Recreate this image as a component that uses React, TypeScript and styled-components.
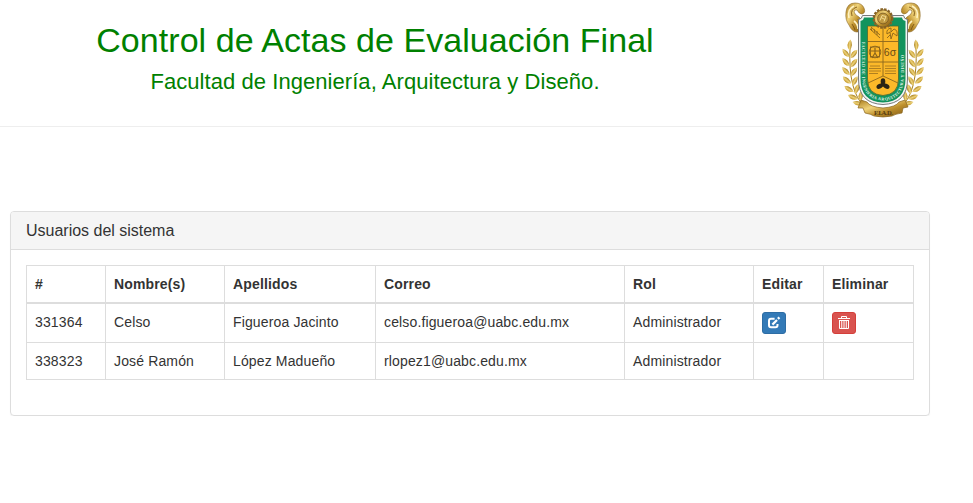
import React from "react";
import styled, { createGlobalStyle } from "styled-components";

const GlobalStyle = createGlobalStyle`
  * { box-sizing: border-box; }
  body {
    margin: 0;
    background: #fff;
    color: #333;
    font: 14px/20px "Liberation Sans", Arial, sans-serif;
    overflow: hidden;
  }
`;

const Header = styled.header`
  display: flex;
  justify-content: space-between;
  height: 127px;
  border-bottom: 1px solid #eee;
  padding: 0 47px 0 0;
`;

const Titles = styled.div`
  width: 750px;
  padding-top: 20px;
  text-align: center;
  color: #008000;
`;

const Title = styled.h1`
  margin: 0;
  font-size: 34px;
  font-weight: 400;
  line-height: 40px;
  letter-spacing: 0.05px;
`;

const Subtitle = styled.h2`
  margin: 10px 0 0;
  font-size: 22px;
  font-weight: 400;
  line-height: 24px;
  letter-spacing: 0.06px;
`;

const Crest = styled.svg`
  display: block;
  width: 86px;
  height: 120px;
  flex: none;
`;

const Panel = styled.section`
  width: 920px;
  height: 205px;
  margin: 84px 0 0 10px;
  border: 1px solid #ddd;
  border-radius: 4px;
  box-shadow: 0 1px 1px rgba(0, 0, 0, 0.05);
`;

const PanelHeading = styled.div`
  height: 38px;
  padding: 9px 15px;
  border-bottom: 1px solid #ddd;
  border-radius: 3px 3px 0 0;
  background: #f5f5f5;
  font-size: 16px;
  line-height: 20px;
  letter-spacing: -0.01px;
`;

const PanelBody = styled.div`
  padding: 15px;
`;

const Table = styled.table`
  width: 887px;
  table-layout: fixed;
  border-collapse: collapse;
  border: 1px solid #ddd;
`;

const HeadCell = styled.th<{ $width: number }>`
  width: ${(p) => p.$width}px;
  height: 37px;
  padding: 0 8px;
  border: 1px solid #ddd;
  border-bottom-width: 2px;
  text-align: left;
  letter-spacing: 0.15px;
`;

const Row = styled.tr<{ $height: number }>`
  height: ${(p) => p.$height}px;
`;

const Cell = styled.td<{ $raised?: boolean }>`
  padding: 0 8px ${(p) => (p.$raised ? 2 : 0)}px;
  border: 1px solid #ddd;
  white-space: nowrap;
  letter-spacing: 0.14px;
`;

const ActionButton = styled.button<{ $fill: string; $edge: string }>`
  display: flex;
  align-items: center;
  justify-content: center;
  width: 24px;
  height: 22px;
  padding: 0;
  border: 1px solid ${(p) => p.$edge};
  border-radius: 3px;
  background: ${(p) => p.$fill};
`;

const Glyph = styled.svg`
  display: block;
  width: 14px;
  height: 14px;
`;

const EditIcon = () => (
  <Glyph viewBox="0 0 14 14" fill="none" stroke="#fff">
    <path d="M7.6 2.8H4Q2 2.8 2 4.8V9.3Q2 11.3 4 11.3H8.5Q10.5 11.3 10.5 9.3V8" strokeWidth="2" />
    <path d="M5.4 8.6 10 4" strokeWidth="2.2" />
    <path d="M10.9 2.9 12.4 1.4" strokeWidth="2.4" />
  </Glyph>
);

const TrashIcon = () => (
  <Glyph viewBox="0 0 14 14" fill="none" stroke="#fff">
    <path d="M4.5 2.5V.5H9.5V2.5M1 2.5H13" />
    <path d="M2.5 4V12.5H11.5V4M4.75 4V12.5M7 4V12.5M9.25 4V12.5M2 4.5H12" />
  </Glyph>
);

const COLUMNS = [
  { label: "#", width: 79 },
  { label: "Nombre(s)", width: 119 },
  { label: "Apellidos", width: 151 },
  { label: "Correo", width: 249 },
  { label: "Rol", width: 129 },
  { label: "Editar", width: 70 },
  { label: "Eliminar", width: 90 },
];

const USERS = [
  { cells: ["331364", "Celso", "Figueroa Jacinto", "celso.figueroa@uabc.edu.mx", "Administrador"], editable: true, height: 40 },
  { cells: ["338323", "José Ramón", "López Madueño", "rlopez1@uabc.edu.mx", "Administrador"], editable: false, height: 37 },
];

const LEAVES = [
  [8, 45, 5], [4, 53, -40], [12, 54, 38], [4, 62, -42], [12, 63, 38], [4, 71, -45],
  [12, 72, 35], [5, 80, -50], [13, 81, 28], [7, 89, -58], [15, 89, 20], [11, 97, -68],
  [19, 96, 8], [16, 103, -80],
];

const Horn = () => (
  <g transform="translate(1 0)">
    <path
      d="M14 3Q6 3 5 12Q4 20 8 25Q11 32 16 32Q21 32 22 26Q23 21 18 17Q14 15 13 12Q13 9 16 10Q18 14 21 14Q25 13 23 8Q21 3 14 3Z"
      fill="url(#gold)"
      stroke="#8a6420"
      strokeWidth=".6"
    />
    <path d="M8 18Q6 9 13 6M13 21Q17 24 17 29" fill="none" stroke="#fff3c4" strokeWidth="1.6" />
    <path d="M11 16Q9 9 16 7M11 24Q13 27 14 30M17 19Q20 22 19 28" fill="none" stroke="#7a5413" strokeWidth=".9" />
  </g>
);

const Branch = () => (
  <g transform="translate(2 0)">
    <path d="M8 48Q6 92 23 107" fill="none" stroke="#a57f1e" strokeWidth="1" />
    {LEAVES.map(([x, y, r]) => (
      <path key={`${x}-${y}`} d="M0 5.5Q-5 0 0-5.5Q4 0 0 5.5" fill="url(#leaf)" transform={`translate(${x} ${y}) rotate(${r})`} />
    ))}
  </g>
);

const FacultyCrest = () => (
  <Crest viewBox="0 0 86 120" aria-label="F.I.A.D.">
    <defs>
      <linearGradient id="gold" x2="1" y2="1">
        <stop stopColor="#a87a1c" />
        <stop offset=".35" stopColor="#f0d37a" />
        <stop offset=".6" stopColor="#bd8f2c" />
        <stop offset="1" stopColor="#7f5815" />
      </linearGradient>
      <linearGradient id="leaf" x2="1">
        <stop stopColor="#c39422" />
        <stop offset=".5" stopColor="#ecd27a" />
        <stop offset="1" stopColor="#a97f1c" />
      </linearGradient>
      <path id="motto" d="M22.4 42V78Q22.4 99.5 43 100.5Q63.6 99.5 63.6 78V40" />
    </defs>
    <Branch />
    <g transform="translate(86 0) scale(-1 1)"><Branch /></g>
    <Horn />
    <g transform="translate(86 0) scale(-1 1)"><Horn /></g>
    <path d="M22.5 15.5H63.5Q64 19 67.5 19.5V79Q67.5 103.5 43 104.5Q18.5 103.5 18.5 79V19.5Q22 19 22.5 15.5Z" fill="#f4f4f2" stroke="#77797a" strokeWidth="1" />
    <path d="M24 17.5H62Q62.5 20.5 65.5 21V79Q65.5 101.5 43 102.5Q20.5 101.5 20.5 79V21Q23.5 20.5 24 17.5Z" fill="#12935d" />
    <text fill="#e6f5ec" fontFamily="Liberation Serif" fontSize="4.2" fontWeight="700">
      <textPath href="#motto" textLength="128">FACULTAD DE INGENIERÍA ARQUITECTURA Y DISEÑO</textPath>
    </text>
    <path d="M27.5 26H58.5V79Q58.5 94.5 43 95.5Q27.5 94.5 27.5 79Z" fill="#fcb929" stroke="#4b6a33" strokeWidth=".8" />
    <path d="M43 26V76M28 41.5H58M28 62H58M43 76 28 83M43 76 58 83" fill="none" stroke="#8b661d" strokeWidth=".9" />
    <g fill="none" stroke="#8a641b" strokeWidth=".9">
      <path d="m30 29 10 9m-9-11 9 8m-9-7 1 3m2-2 1 4m2-2 0 4" />
      <path d="M51 28q-5 1-4 6l3-2 1 7 2-6 4 3q1-6-3-7l-3 3zM47 38l3-3" />
      <rect x="30.5" y="47" width="9" height="10" />
      <circle cx="35" cy="52" r="5.8" />
      <path d="M35 48v6m-4-3h8m-4 2-3 5m3-5 3 5" strokeWidth="1.2" />
      <path d="M30 66h10m-11 2.5h12m-12 2.5h12m-12 2.5h9M45 66h11m-11 2.5h11m-11 2.5h11m-11 2.5h11" opacity=".75" />
    </g>
    <text x="43.8" y="55.5" fill="#6b4d17" fontFamily="Liberation Sans" fontSize="10.5">6σ</text>
    <g fill="#2b2415">
      <ellipse cx="43" cy="81.5" rx="2.3" ry="3.2" />
      <ellipse cx="39.6" cy="86.3" rx="2.3" ry="3.3" transform="rotate(60 39.6 86.3)" />
      <ellipse cx="46.4" cy="86.3" rx="2.3" ry="3.3" transform="rotate(-60 46.4 86.3)" />
      <circle cx="43" cy="84.8" r="2" />
    </g>
    <circle cx="43" cy="18.5" r="9" fill="#b28937" stroke="#8a6526" strokeWidth="2.8" strokeDasharray="2.4 1.2" />
    <circle cx="43" cy="18.5" r="8.6" fill="url(#gold)" stroke="#7c5c22" strokeWidth=".8" />
    <circle cx="43" cy="18.5" r="5.4" fill="#bf983f" stroke="#76561e" strokeWidth=".8" />
    <path d="m40 20.5 2-5 4 1-2 5m-3-4 4 2" fill="none" stroke="#f3dc93" />
    <path
      d="M21 100 27 102Q30 107 43 108Q56 107 59 102L65 100 68 107 63 108 62 113Q55 114 52 116Q43 118 34 116Q31 114 25 113L23 108 18 108Z"
      fill="url(#gold)"
      stroke="#8a6620"
      strokeWidth=".7"
    />
    <text x="34" y="115.3" fill="#54390f" fontFamily="Liberation Serif" fontSize="6.6" fontWeight="700" textLength="19">F.I.A.D.</text>
  </Crest>
);

export default function App() {
  return (
    <>
      <GlobalStyle />
      <Header>
        <Titles>
          <Title>Control de Actas de Evaluación Final</Title>
          <Subtitle>Facultad de Ingeniería, Arquitectura y Diseño.</Subtitle>
        </Titles>
        <FacultyCrest />
      </Header>
      <Panel>
        <PanelHeading>Usuarios del sistema</PanelHeading>
        <PanelBody>
          <Table>
            <thead>
              <tr>{COLUMNS.map((c) => <HeadCell key={c.label} $width={c.width}>{c.label}</HeadCell>)}</tr>
            </thead>
            <tbody>
              {USERS.map((user) => (
                <Row key={user.cells[0]} $height={user.height}>
                  {user.cells.map((text, i) => <Cell key={i} $raised={user.editable}>{text}</Cell>)}
                  <Cell>{user.editable && <ActionButton $fill="#337ab7" $edge="#2e6da4" aria-label="Editar"><EditIcon /></ActionButton>}</Cell>
                  <Cell>{user.editable && <ActionButton $fill="#d9534f" $edge="#d43f3a" aria-label="Eliminar"><TrashIcon /></ActionButton>}</Cell>
                </Row>
              ))}
            </tbody>
          </Table>
        </PanelBody>
      </Panel>
    </>
  );
}
